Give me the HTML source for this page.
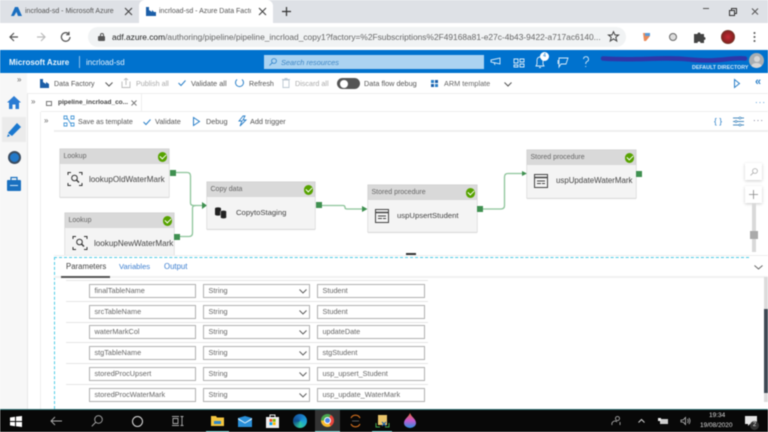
<!DOCTYPE html>
<html><head><meta charset="utf-8"><style>
*{box-sizing:border-box}
html,body{margin:0;padding:0;width:768px;height:432px;overflow:hidden;background:#fff}
body{font-family:"Liberation Sans",sans-serif;position:relative;filter:blur(.45px)}
.a{position:absolute}
.t{position:absolute;white-space:nowrap;line-height:12px;font-size:7.3px;color:#444}
svg{position:absolute;overflow:visible}
.node{position:absolute;width:109px;background:#f4f4f4;box-shadow:0 0 0 .5px #ccc,0 1px 1px #ddd}
.node .h{height:15px;background:#d9d9d9;color:#666;font-size:7px;line-height:16px;padding-left:3.5px}
.node .n{position:absolute;left:29px;top:25px;font-size:8.1px;color:#444;line-height:12px;white-space:nowrap}
.ok{position:absolute;right:2px;top:3px;width:9.500px;height:9.500px;border-radius:50%;background:#57a300}
.ok:after{content:"";position:absolute;left:2.300px;top:1.500px;width:5px;height:3px;border-left:1.300px solid #fff;border-bottom:1.300px solid #fff;transform:rotate(-45deg)}
.port{position:absolute;width:6px;height:6px;background:#3f9050}
.in{position:absolute;height:14px;border:1px solid #b0b0b0;background:#fff;font-size:7.300px;line-height:12.500px;color:#666;padding-left:4.500px;white-space:nowrap}
.sep{position:absolute;left:66px;width:362px;height:1px;background:#e6e6e6}
</style></head><body>

<!-- browser tabs -->
<div class="a" style="left:0;top:0;width:768px;height:23px;background:#dee1e6"></div>
<div class="a" style="left:139px;top:0;width:134px;height:24px;background:#fff;border-radius:6px 6px 0 0"></div>
<svg style="left:11px;top:7px" width="11" height="9" viewBox="0 0 11 9"><path d="M4 0H7L11 9H7L5.500 5 3 9H0Z" fill="#1b6fc0"/></svg>
<div class="t" style="left:25px;top:6px;color:#555;font-size:7px">incrload-sd - Microsoft Azure</div>
<svg style="left:124px;top:7px" width="9" height="9" viewBox="0 0 9 9"><path d="M1 1L8 8M8 1L1 8" stroke="#444" stroke-width="1.100"/></svg>
<svg style="left:146px;top:7px" width="10" height="9" viewBox="0 0 10 9"><path d="M0 0H3V3L6 5V3L8 5H10V9H0Z" fill="#1c5fa8"/></svg>
<div class="t" style="left:159px;top:6px;width:92px;overflow:hidden;color:#555;font-size:7px">incrload-sd - Azure Data Factory</div>
<svg style="left:258px;top:7px" width="9" height="9" viewBox="0 0 9 9"><path d="M1 1L8 8M8 1L1 8" stroke="#444" stroke-width="1.100"/></svg>
<svg style="left:282px;top:7px" width="9" height="9" viewBox="0 0 9 9"><path d="M4.500 0V9M0 4.500H9" stroke="#333" stroke-width="1.200"/></svg>
<svg style="left:703px;top:8px" width="60" height="10" viewBox="0 0 60 10"><path d="M0 .5H6" stroke="#555" stroke-width="1"/><path d="M26.500 2.500H31.500V7.500H26.500ZM28.500 2.500V.5H33.500V5.500H31.500" fill="none" stroke="#333" stroke-width="1"/><path d="M49 .5L55 6.500M55 .5L49 6.500" stroke="#555" stroke-width="1"/></svg>

<!-- address bar -->
<svg style="left:9px;top:31px" width="62" height="12" viewBox="0 0 62 12"><path d="M9 6H1M5 2L1 6 5 10" fill="none" stroke="#555" stroke-width="1.200"/><path d="M28 6H36M32 2L36 6 32 10" fill="none" stroke="#bbb" stroke-width="1.200"/><path d="M61 6A4.300 4.300 0 1 1 59.500 2.700M60 .8V3.600H57.200" fill="none" stroke="#555" stroke-width="1.200"/></svg>
<div class="a" style="left:88px;top:27px;width:538px;height:20px;background:#f1f3f4;border-radius:10px"></div>
<div class="a" style="left:98px;top:36px;width:7px;height:5px;background:#555;border-radius:1px"></div>
<div class="a" style="left:99.500px;top:33px;width:4px;height:4px;border:1px solid #555;border-bottom:0;border-radius:2px 2px 0 0"></div>
<div class="t" style="left:112px;top:31px;font-size:8.400px;color:#666;width:490px;overflow:hidden"><span style="color:#222">adf.azure.com</span>/authoring/pipeline/pipeline_incrload_copy1?factory=%2Fsubscriptions%2F49168a81-e27c-4b43-9422-a717ac6140...</div>
<svg style="left:608px;top:31px" width="11" height="11" viewBox="0 0 11 11"><path d="M5.500 .7L7 4H10.500L7.800 6.200 8.800 10 5.500 7.900 2.200 10 3.200 6.200 .5 4H4Z" fill="none" stroke="#444" stroke-width="1"/></svg>
<svg style="left:642px;top:32px" width="9" height="10" viewBox="0 0 9 10"><path d="M1 1H8V4L4 9H2Z" fill="#e98a5a"/><path d="M3 1H8V4H3Z" fill="#5a9bd8"/></svg>
<div class="a" style="left:669px;top:33px;width:8px;height:8px;border-radius:50%;background:#ddd;border:1.500px solid #666"></div>
<svg style="left:694px;top:31px" width="12" height="12" viewBox="0 0 12 12"><path d="M0 3H3.500A1.500 1.500 0 0 1 6.500 3H10V6A1.500 1.500 0 0 1 10 9V12H6.500A1.500 1.500 0 0 0 3.500 12H0Z" fill="#444"/></svg>
<div class="a" style="left:721px;top:30px;width:14px;height:14px;border-radius:50%;background:radial-gradient(circle at 50% 50%,#c82a35,#8a2222 55%,#3f6a35)"></div>
<svg style="left:753px;top:32px" width="3" height="10" viewBox="0 0 3 10"><circle cx="1.500" cy="1" r="1" fill="#555"/><circle cx="1.500" cy="5" r="1" fill="#555"/><circle cx="1.500" cy="9" r="1" fill="#555"/></svg>

<!-- azure header -->
<div class="a" style="left:0;top:50px;width:768px;height:23px;background:#0072ce;box-shadow:0 2px 4px rgba(0,0,0,.18)"></div>
<div class="t" style="left:9px;top:57px;color:#eaf4fc;font-weight:bold;font-size:8px">Microsoft Azure</div>
<div class="a" style="left:79px;top:56px;width:1px;height:12px;background:#8cc0ea"></div>
<div class="t" style="left:86px;top:57px;color:#e3f0fb;font-size:7.900px">incrload-sd</div>
<div class="a" style="left:264px;top:55px;width:220px;height:14px;background:#abd3f1"></div>
<svg style="left:269px;top:58px" width="8" height="8" viewBox="0 0 8 8"><circle cx="5" cy="3" r="2.400" fill="none" stroke="#2a7fc8" stroke-width=".8"/><path d="M3.300 4.700L.5 7.500" stroke="#2a7fc8" stroke-width=".8"/></svg>
<div class="t" style="left:281px;top:57px;font-style:italic;font-size:7.400px;color:#3f86c4">Search resources</div>
<svg style="left:490px;top:54px" width="100" height="16" viewBox="0 0 100 16" fill="none" stroke="#dcecf9" stroke-width=".9"><path d="M1 6L10 4V10L1 8ZM4 8.500L5 11"/><path d="M24 5H28V9H24ZM30 5H34V8H30ZM24 11H28V13H24ZM30 10H34V13H30Z"/><path d="M46 12H54L53 10V6A3 3 0 0 0 47 6V10ZM49 13.500H51"/><path d="M69 4H78L76 10H71L69 13ZM68 6V10"/><path d="M93.500 5A2.500 2.500 0 1 1 97 7.500C96 8 95.700 9 95.700 10M95.700 12V13"/></svg>
<div class="a" style="left:541px;top:52px;width:9px;height:9px;border-radius:50%;background:#fff;color:#0072ce;font-size:5px;line-height:9px;text-align:center;margin-left:-1px">4</div>
<div class="t" style="left:692px;top:63px;font-size:5.300px;font-weight:bold;color:#d5e9f8;line-height:11px">DEFAULT DIRECTORY</div>
<svg style="left:600px;top:54px" width="148" height="10" viewBox="0 0 148 10"><path d="M3 4.500C40 7 60 2.500 90 5.500S130 3 145 4.500" fill="none" stroke="#2f36a8" stroke-width="4.500" stroke-linecap="round"/></svg>
<div class="a" style="left:749px;top:53px;width:15px;height:15px;border-radius:50%;background:#a8aeb2;overflow:hidden"><div class="a" style="left:4.500px;top:3px;width:6px;height:6px;border-radius:50%;background:#d6d6d6"></div><div class="a" style="left:2px;top:9.500px;width:11px;height:8px;border-radius:50%;background:#d6d6d6"></div></div>

<!-- left rail -->
<div class="a" style="left:0;top:73px;width:27px;height:336px;background:#f7f7f7"></div>
<div class="a" style="left:2px;top:117px;width:24px;height:25px;background:#ebebeb"></div>
<div class="t" style="left:17px;top:74px;color:#666;font-size:8px">»</div>
<svg style="left:7px;top:96px" width="14" height="13" viewBox="0 0 14 13"><path d="M7 0L14 6.500H12V13H8.500V8.500H5.500V13H2V6.500H0Z" fill="#2b7cd3"/></svg>
<svg style="left:7px;top:123px" width="14" height="14" viewBox="0 0 14 14"><path d="M10 0L14 4 5 13 1 10Z" fill="#1a78cf"/><path d="M0 14L1 11 3 13Z" fill="#1a78cf"/></svg>
<div class="a" style="left:7.500px;top:151px;width:13px;height:13px;border-radius:50%;background:#2379c9;border:2px solid #3b4c60"></div>
<svg style="left:7px;top:177px" width="14" height="14" viewBox="0 0 14 14"><path d="M4 3V.5H10V3" fill="none" stroke="#1a70bf" stroke-width="1.200"/><rect y="3" width="14" height="11" rx="1" fill="#1a70bf"/><path d="M3 8.500H11" stroke="#cfe6f8" stroke-width="1"/></svg>

<!-- toolbar -->
<div class="a" style="left:27px;top:73px;width:741px;height:20px;background:#fff"></div>
<div class="a" style="left:27px;top:93px;width:741px;height:1px;background:#eee"></div>
<svg style="left:40px;top:79px" width="9" height="9" viewBox="0 0 9 9"><path d="M0 0H3V3L6 5V3L9 5V9H0Z" fill="#1c5fa8"/></svg>
<div class="t" style="left:54px;top:78px;color:#555;font-size:7.100px">Data Factory</div>
<svg style="left:105px;top:82px" width="8" height="5" viewBox="0 0 8 5"><path d="M.5 .5L4 4 7.500 .5" fill="none" stroke="#555"/></svg>
<svg style="left:122px;top:78px" width="8" height="10" viewBox="0 0 8 10"><path d="M0 3.500V9.500H8V3.500M4 7V.5M2 2L4 .3 6 2" fill="none" stroke="#bbb" stroke-width=".9"/></svg>
<div class="t" style="left:136px;top:78px;color:#aaa;font-size:7.200px">Publish all</div>
<svg style="left:178px;top:80px" width="8" height="6" viewBox="0 0 8 6"><path d="M.5 3L3 5.500 7.500 .5" fill="none" stroke="#2a7fc8"/></svg>
<div class="t" style="left:191px;top:78px;color:#555;font-size:7.400px">Validate all</div>
<svg style="left:235px;top:78px" width="9" height="10" viewBox="0 0 9 10"><path d="M2 1.500A4 4 0 1 0 7 1.500" fill="none" stroke="#2a7fc8" stroke-width="1"/></svg>
<div class="t" style="left:249px;top:78px;color:#555;font-size:7.100px">Refresh</div>
<svg style="left:282px;top:78px" width="8" height="10" viewBox="0 0 8 10"><path d="M1 2H7V9.500H1ZM0 1.500H8M3 1.500V.5H5V1.500" fill="none" stroke="#bcc8d2" stroke-width=".9"/></svg>
<div class="t" style="left:295px;top:78px;color:#aaa;font-size:7.200px">Discard all</div>
<div class="a" style="left:337px;top:78px;width:23px;height:11px;border-radius:6px;background:#555"></div>
<div class="a" style="left:340px;top:79.500px;width:8px;height:8px;border-radius:50%;background:#fff"></div>
<div class="t" style="left:364px;top:78px;color:#555;font-size:7.300px">Data flow debug</div>
<svg style="left:431px;top:80px" width="7" height="7" viewBox="0 0 7 7"><rect width="3" height="3" fill="#2a7fc8"/><rect x="4" width="3" height="3" fill="#1c5fa8"/><rect y="4" width="3" height="3" fill="#1c5fa8"/><rect x="4" y="4" width="3" height="3" fill="#2a7fc8"/></svg>
<div class="t" style="left:444px;top:78px;color:#666;font-size:7.300px">ARM template</div>
<svg style="left:504px;top:82px" width="8" height="5" viewBox="0 0 8 5"><path d="M.5 .5L4 4 7.500 .5" fill="none" stroke="#555"/></svg>
<svg style="left:734px;top:79px" width="6" height="9" viewBox="0 0 6 9"><path d="M.5 .5L5.500 4.500 .5 8.500Z" fill="none" stroke="#2a7fc8"/></svg>
<div class="t" style="left:755px;top:76px;color:#2a7fc8;font-size:11px;font-weight:bold">«</div>

<!-- pipeline tab row -->
<div class="a" style="left:27px;top:94px;width:14px;height:315px;border-left:1px solid #e8e8e8"></div>
<div class="a" style="left:40px;top:112px;width:1px;height:297px;background:#eee"></div>
<div class="t" style="left:31px;top:96px;color:#666;font-size:8px">»</div>
<div class="a" style="left:46px;top:101px;width:6px;height:5px;border:1px solid #777"></div>
<div class="t" style="left:58px;top:97px;color:#444;font-size:6.500px;font-weight:bold">pipeline_incrload_co...</div>
<svg style="left:131px;top:100px" width="6" height="6" viewBox="0 0 6 6"><path d="M.5 .5L5.500 5.500M5.500 .5L.5 5.500" stroke="#777" stroke-width=".9"/></svg>
<div class="a" style="left:141px;top:94px;width:1px;height:18px;background:#eee"></div>
<div class="a" style="left:41px;top:111px;width:727px;height:1px;background:#eee"></div>
<div class="t" style="left:755px;top:97px;color:#2a7fc8;font-size:8px;letter-spacing:1px">···</div>

<!-- pipeline toolbar -->
<div class="t" style="left:44px;top:115px;color:#666;font-size:8px">»</div>
<svg style="left:64px;top:116px" width="10" height="10" viewBox="0 0 10 10"><path d="M0 0H3V3H0ZM7 0H10V3H7ZM0 7H3V10H0ZM7 7H10V10H7ZM3 2L7 8" fill="none" stroke="#4a9ad8" stroke-width=".9"/></svg>
<div class="t" style="left:78px;top:116px;color:#555;font-size:7.100px">Save as template</div>
<svg style="left:143px;top:119px" width="8" height="6" viewBox="0 0 8 6"><path d="M.5 3L3 5.500 7.500 .5" fill="none" stroke="#2a7fc8"/></svg>
<div class="t" style="left:155px;top:116px;color:#555;font-size:7.300px">Validate</div>
<svg style="left:193px;top:117px" width="7" height="9" viewBox="0 0 7 9"><path d="M.5 .5L6.500 4.500 .5 8.500Z" fill="none" stroke="#2a7fc8"/></svg>
<div class="t" style="left:206px;top:116px;color:#555;font-size:7.300px">Debug</div>
<svg style="left:238px;top:116px" width="9" height="10" viewBox="0 0 9 10"><path d="M5 0L1 5H4L2 10 8 4H5L7 0Z" fill="none" stroke="#2a7fc8" stroke-width=".9"/></svg>
<div class="t" style="left:250px;top:116px;color:#555;font-size:7.300px">Add trigger</div>
<div class="t" style="left:714px;top:115px;color:#2a7fc8;font-size:8.500px">{ }</div>
<svg style="left:733px;top:117px" width="11" height="9" viewBox="0 0 11 9"><path d="M0 1H11M0 4.500H11M0 8H11" stroke="#4a8cc0" stroke-width=".9"/><circle cx="7" cy="1" r="1" fill="#fff" stroke="#4a8cc0" stroke-width=".7"/><circle cx="3" cy="4.500" r="1" fill="#fff" stroke="#4a8cc0" stroke-width=".7"/><circle cx="7" cy="8" r="1" fill="#fff" stroke="#4a8cc0" stroke-width=".7"/></svg>
<div class="t" style="left:753px;top:115px;color:#557;font-size:8px;letter-spacing:1px">···</div>
<div class="a" style="left:54px;top:130px;width:714px;height:2px;background:#eee"></div>

<!-- connectors -->
<svg style="left:0;top:0" width="768" height="432" viewBox="0 0 768 432" fill="none" stroke="#8dc49a" stroke-width="1.300">
<path d="M175 172.500H187Q190.500 172.500 190.500 176V203Q190.500 205.500 194 205.500H203"/>
<path d="M179 236.500H189Q192.500 236.500 192.500 233V208Q192.500 205.500 196 205.500"/>
<path d="M321 205.500H343Q345 205.500 345 207.500Q345 209 347 209H363"/>
<path d="M482 209H501Q504.500 209 504.500 205.500V177Q504.500 173.500 508 173.500H523"/>
<path d="M202 202L207 205.500 202 209ZM362 206L367.500 209 362 212ZM522 171L527 173.500 522 176Z" fill="#3f9050" stroke="none"/>
</svg>

<!-- nodes -->
<div class="node" style="left:60px;top:149px;height:48px"><div class="h">Lookup</div><div class="ok"></div><div class="n">lookupOldWaterMark</div>
<svg style="left:8px;top:23px" width="14" height="14" viewBox="0 0 14 14" fill="none" stroke="#333" stroke-width="1"><path d="M0 3V.5H3M11 .5H14V3M0 11V13.500H3M11 13.500H14V11"/><circle cx="6.500" cy="6" r="2.800"/><path d="M8.500 8L11 10.500" stroke-width="1.300"/></svg></div>
<div class="port" style="left:169.500px;top:169.500px"></div>

<div class="node" style="left:65px;top:213px;height:48px"><div class="h">Lookup</div><div class="ok"></div><div class="n">lookupNewWaterMark</div>
<svg style="left:8px;top:23px" width="14" height="14" viewBox="0 0 14 14" fill="none" stroke="#333" stroke-width="1"><path d="M0 3V.5H3M11 .5H14V3M0 11V13.500H3M11 13.500H14V11"/><circle cx="6.500" cy="6" r="2.800"/><path d="M8.500 8L11 10.500" stroke-width="1.300"/></svg></div>
<div class="port" style="left:174px;top:233.500px"></div>

<div class="node" style="left:207px;top:182px;height:47px;width:108px"><div class="h">Copy data</div><div class="ok"></div><div class="n" style="left:29px;font-size:7.700px">CopytoStaging</div>
<svg style="left:8px;top:25px" width="12" height="12" viewBox="0 0 12 12" fill="#222"><path d="M0 1.500C0 0 6 0 6 1.500V7.500C6 9 0 9 0 7.500Z"/><path d="M5.500 4.500C5.500 3 11.500 3 11.500 4.500V10.500C11.500 12 5.500 12 5.500 10.500Z" stroke="#f4f4f4" stroke-width=".5"/></svg></div>
<div class="port" style="left:315.500px;top:202px"></div>

<div class="node" style="left:368px;top:185px;height:47px"><div class="h">Stored procedure</div><div class="ok"></div><div class="n" style="left:29px;font-size:7.700px">uspUpsertStudent</div>
<svg style="left:7px;top:24px" width="14" height="14" viewBox="0 0 14 14" fill="none" stroke="#444"><rect x=".5" y=".5" width="13" height="13"/><path d="M.5 3.500H13.500" stroke-width="1.500"/><path d="M3 7H11M3 9.500H7M8 9.500H11" stroke-width=".9"/></svg></div>
<div class="port" style="left:476.500px;top:206px"></div>

<div class="node" style="left:527px;top:150px;height:48px"><div class="h">Stored procedure</div><div class="ok"></div><div class="n" style="left:29px;font-size:7.900px">uspUpdateWaterMark</div>
<svg style="left:7px;top:24px" width="14" height="14" viewBox="0 0 14 14" fill="none" stroke="#444"><rect x=".5" y=".5" width="13" height="13"/><path d="M.5 3.500H13.500" stroke-width="1.500"/><path d="M3 7H11M3 9.500H7M8 9.500H11" stroke-width=".9"/></svg></div>
<div class="port" style="left:636px;top:171px"></div>

<!-- zoom controls -->
<div class="a" style="left:745px;top:163px;width:17px;height:17px;background:#fff;box-shadow:0 1px 3px rgba(0,0,0,.2)"></div>
<svg style="left:750px;top:168px" width="8" height="8" viewBox="0 0 8 8"><circle cx="5" cy="3" r="2.400" fill="none" stroke="#aaa" stroke-width=".8"/><path d="M3.300 4.700L.5 7.500" stroke="#aaa" stroke-width=".8"/></svg>
<div class="a" style="left:745px;top:186px;width:17px;height:17px;background:#fff;box-shadow:0 1px 3px rgba(0,0,0,.2)"></div>
<svg style="left:749px;top:190px" width="9" height="9" viewBox="0 0 9 9"><path d="M4.500 0V9M0 4.500H9" stroke="#888" stroke-width=".8"/></svg>
<div class="a" style="left:752px;top:203px;width:4px;height:49px;background:#d9d9d9"></div>
<div class="a" style="left:750px;top:231px;width:8px;height:8px;background:#aaa"></div>

<!-- bottom panel -->
<div class="a" style="left:54px;top:255px;width:714px;height:154px;background:#fff;border-top:1px solid #eee"></div>
<div class="a" style="left:406px;top:253px;width:10px;height:2px;background:#333"></div>
<div class="a" style="left:54px;top:257px;width:695px;border-top:1px dashed #4fcbe6"></div>
<div class="a" style="left:54px;top:257px;height:152px;border-left:1px dashed #4fcbe6"></div>
<div class="a" style="left:54px;top:276px;width:714px;height:2px;background:#f1f1f1"></div>
<div class="a" style="left:61px;top:276px;width:49px;height:1.500px;background:#555"></div>
<div class="t" style="left:66px;top:261px;color:#444;font-size:7.800px">Parameters</div>
<div class="t" style="left:119px;top:261px;color:#3d7fd0;font-size:7.600px">Variables</div>
<div class="t" style="left:164px;top:261px;color:#3d7fd0;font-size:7.800px">Output</div>
<svg style="left:754px;top:265px" width="9" height="5" viewBox="0 0 9 5"><path d="M.5 .5L4.500 4 8.500 .5" fill="none" stroke="#666"/></svg>

<div class="sep" style="top:280px"></div><div class="sep" style="top:301px"></div><div class="sep" style="top:322px"></div><div class="sep" style="top:342px"></div><div class="sep" style="top:363px"></div><div class="sep" style="top:384px"></div>

<div class="in" style="left:89px;top:284px;width:107px">finalTableName</div><div class="in" style="left:203px;top:284px;width:107px">String</div><div class="in" style="left:317px;top:284px;width:108px">Student</div>
<div class="in" style="left:89px;top:305px;width:107px">srcTableName</div><div class="in" style="left:203px;top:305px;width:107px">String</div><div class="in" style="left:317px;top:305px;width:108px">Student</div>
<div class="in" style="left:89px;top:325px;width:107px">waterMarkCol</div><div class="in" style="left:203px;top:325px;width:107px">String</div><div class="in" style="left:317px;top:325px;width:108px">updateDate</div>
<div class="in" style="left:89px;top:346px;width:107px">stgTableName</div><div class="in" style="left:203px;top:346px;width:107px">String</div><div class="in" style="left:317px;top:346px;width:108px">stgStudent</div>
<div class="in" style="left:89px;top:367px;width:107px">storedProcUpsert</div><div class="in" style="left:203px;top:367px;width:107px">String</div><div class="in" style="left:317px;top:367px;width:108px">usp_upsert_Student</div>
<div class="in" style="left:89px;top:388px;width:107px">storedProcWaterMark</div><div class="in" style="left:203px;top:388px;width:107px">String</div><div class="in" style="left:317px;top:388px;width:108px">usp_update_WaterMark</div>
<svg style="left:299px;top:289px" width="8" height="110" viewBox="0 0 8 110" fill="none" stroke="#555" stroke-width=".9"><path d="M.5 .5L4 4 7.500 .5M.5 21.500L4 25 7.500 21.500M.5 41.500L4 45 7.500 41.500M.5 62.500L4 66 7.500 62.500M.5 83.500L4 87 7.500 83.500M.5 104.500L4 108 7.500 104.500"/></svg>

<!-- scrollbar -->
<div class="a" style="left:764px;top:277px;width:4px;height:125px;background:#dcdcdc"></div>
<div class="a" style="left:764px;top:309px;width:4px;height:84px;background:#3f4a55"></div>

<!-- taskbar -->
<div class="a" style="left:0;top:409px;width:768px;height:23px;background:#080808;border-top:1px solid #2d6f73"></div>
<svg style="left:10px;top:416px" width="12" height="11" viewBox="0 0 12 11" fill="#fff"><path d="M0 1.500L5 .8V5H0ZM6 .6L12 0V5H6ZM0 6H5V10.200L0 9.500ZM6 6H12V11L6 10.300Z"/></svg>
<svg style="left:50px;top:416px" width="12" height="10" viewBox="0 0 12 10"><path d="M12 5H1M5 1L1 5 5 9" fill="none" stroke="#aaa" stroke-width=".9"/></svg>
<svg style="left:91px;top:415px" width="12" height="12" viewBox="0 0 12 12"><circle cx="7.500" cy="4.500" r="3.800" fill="none" stroke="#aaa" stroke-width=".9"/><path d="M4.800 7.200L.8 11.300" stroke="#aaa" stroke-width="1"/></svg>
<div class="a" style="left:132px;top:416px;width:11px;height:11px;border:1.500px solid #ddd;border-radius:50%"></div>
<svg style="left:172px;top:416px" width="12" height="10" viewBox="0 0 12 10" fill="none" stroke="#aaa" stroke-width=".9"><path d="M0 .5H7M0 9.500H7M1 2.500H6V7.500H1ZM10 0V10M8.500 .5H11.500M8.500 9.500H11.500"/></svg>
<svg style="left:211px;top:416px" width="13" height="10" viewBox="0 0 13 10"><path d="M0 0H5L6 1.500H13V10H0Z" fill="#f4c53f"/><rect x="3" y="5" width="7" height="3" fill="#2e86c9"/></svg>
<svg style="left:238px;top:416px" width="14" height="11" viewBox="0 0 14 11"><path d="M0 2L7 0 14 2V11H0Z" fill="#2a8fd8"/><path d="M0 2L7 6.500 14 2V3.500L7 7.500 0 3.500Z" fill="#dff1fd"/></svg>
<svg style="left:266px;top:414px" width="13" height="14" viewBox="0 0 13 14"><rect y="3" width="13" height="11" fill="#eee"/><path d="M4 3V1H9V3" fill="none" stroke="#eee"/><rect x="3.500" y="5" width="2.800" height="2.800" fill="#f25022"/><rect x="6.800" y="5" width="2.800" height="2.800" fill="#7fba00"/><rect x="3.500" y="8.300" width="2.800" height="2.800" fill="#00a4ef"/><rect x="6.800" y="8.300" width="2.800" height="2.800" fill="#ffb900"/></svg>
<div class="a" style="left:293px;top:414px;width:14px;height:14px;border-radius:50%;background:conic-gradient(#1a6fbc,#1b9fd8,#30c8a0,#0f4a8a,#1a6fbc)"></div>
<div class="a" style="left:315px;top:410px;width:25px;height:22px;background:#333"></div>
<div class="a" style="left:321px;top:414px;width:13px;height:13px;border-radius:50%;background:conic-gradient(from 30deg,#e8453c 0 120deg,#f9bb2d 120deg 240deg,#4aa84f 240deg)"></div>
<div class="a" style="left:324px;top:417px;width:7px;height:7px;border-radius:50%;background:#4a86e8;border:1px solid #fff"></div>
<svg style="left:350px;top:415px" width="11" height="12" viewBox="0 0 11 12" fill="none" stroke="#d9731f" stroke-width="1.100"><path d="M1 3A5 5 0 0 1 10 3M1 9A5 5 0 0 0 10 9"/><path d="M2 6H9" stroke="#777" stroke-width=".7"/></svg>
<svg style="left:376px;top:414px" width="13" height="14" viewBox="0 0 13 14"><rect x="2" y="1" width="9" height="10" fill="#e9c46a"/><path d="M0 9V13H4M13 9V13H9" fill="none" stroke="#3fa34d"/><path d="M6 8L10 12M10 8L6 12" stroke="#1f5fa8" stroke-width="1.200"/></svg>
<svg style="left:404px;top:413px" width="12" height="15" viewBox="0 0 12 15"><defs><linearGradient id="g" x1="0" y1="0" x2="0" y2="1"><stop offset="0" stop-color="#e8683a"/><stop offset=".5" stop-color="#c55ad0"/><stop offset="1" stop-color="#2c8fe0"/></linearGradient></defs><path d="M6 0C7.500 4 12 6 12 10A6 5 0 0 1 0 10C0 6 4.500 4 6 0Z" fill="url(#g)"/></svg>
<div class="a" style="left:206px;top:431px;width:23px;height:1px;background:#6bc4c4"></div>
<div class="a" style="left:315px;top:431px;width:25px;height:1px;background:#6bc4c4"></div>
<div class="a" style="left:372px;top:431px;width:20px;height:1px;background:#6bc4c4"></div>

<svg style="left:612px;top:416px" width="9" height="9" viewBox="0 0 9 9" fill="none" stroke="#bbb" stroke-width=".8"><circle cx="5.500" cy="2.500" r="2"/><path d="M0 9A3 3 0 0 1 5 6M8 9V6"/></svg>
<svg style="left:638px;top:419px" width="7" height="4" viewBox="0 0 7 4"><path d="M.5 3.500L3.500 .5 6.500 3.500" fill="none" stroke="#ccc"/></svg>
<svg style="left:658px;top:418px" width="10" height="7" viewBox="0 0 10 7"><rect x="2" y="1" width="8" height="5" fill="#ccc"/><path d="M0 0H3V3H0Z" fill="#eee"/></svg>
<svg style="left:681px;top:417px" width="10" height="8" viewBox="0 0 10 8" fill="none" stroke="#bbb" stroke-width=".8"><path d="M0 3H2L4.500 .5V7.500L2 5H0ZM6.500 2Q8 4 6.500 6M8 1Q10 4 8 7"/></svg>
<div class="t" style="left:709px;top:410px;color:#ddd;font-size:6.500px">19:34</div>
<div class="t" style="left:700px;top:420px;color:#ddd;font-size:6.500px">19/08/2020</div>
<svg style="left:745px;top:416px" width="12" height="10" viewBox="0 0 12 10"><path d="M0 0H12V8H5L3 10V8H0Z" fill="#e6e6e6"/></svg>
<div class="a" style="left:750px;top:421px;width:9px;height:9px;border-radius:50%;background:#333;color:#eee;font-size:6px;line-height:9px;text-align:center">2</div>

</body></html>
